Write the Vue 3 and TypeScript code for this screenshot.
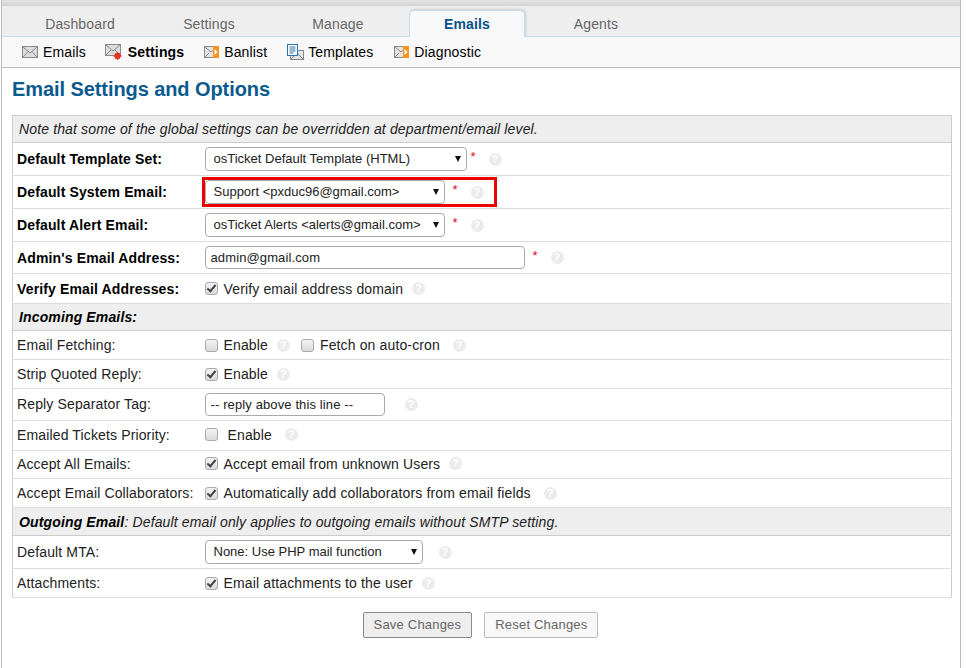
<script setup lang="ts">
const tabs = ['Dashboard', 'Settings', 'Manage', 'Emails', 'Agents'];
const subnav = [
  { label: 'Emails', icon: 'mail' },
  { label: 'Settings', icon: 'gear', active: true },
  { label: 'Banlist', icon: 'play' },
  { label: 'Templates', icon: 'doc' },
  { label: 'Diagnostic', icon: 'play' },
];
</script>

<template>
  <div class="page">
    <div class="topbar" />
    <div class="tabs">
      <a v-for="tab in tabs" :key="tab" class="tab" :class="{ active: tab === 'Emails' }">{{ tab }}</a>
    </div>
    <div class="subnav">
      <a v-for="item in subnav" :key="item.label" class="subitem" :class="{ active: item.active }">
        <svg v-if="item.icon === 'mail'" width="16" height="14" viewBox="0 0 16 14">
          <rect x=".5" y="1.5" width="15" height="11" fill="#ddd" stroke="#8a8a8a" />
          <path d="M1 2l7 6 7-6M1 12l5-5.5M15 12l-5-5.5" fill="none" stroke="#8a8a8a" />
        </svg>
        <svg v-else-if="item.icon === 'gear'" width="18" height="17" viewBox="0 0 18 17">
          <rect x=".5" y=".5" width="15" height="11" fill="#ddd" stroke="#8a8a8a" />
          <path d="M1 1l7 6 7-6M1 11l5-5M15 11l-5-5" fill="none" stroke="#8a8a8a" />
          <circle cx="12.5" cy="12" r="3" fill="#e2342b" />
          <path d="M12.500 8v8M8.500 12h8M10 9.500l5 5M15 9.500l-5 5" stroke="#e2342b" stroke-width="1.300" />
        </svg>
        <svg v-else-if="item.icon === 'play'" width="15" height="12" viewBox="0 0 15 12">
          <rect x=".5" y=".5" width="13" height="11" fill="#e4e4e4" stroke="#8a8a8a" />
          <path d="M1 1l6 5 2-1.500M1 11l4-4" fill="none" stroke="#8a8a8a" />
          <rect x="9" y="0" width="6" height="12" fill="#f7931e" />
          <path d="M10.500 3l3 3-3 3z" fill="#fff" />
        </svg>
        <svg v-else width="17" height="16" viewBox="0 0 17 16">
          <rect x="3.500" y="6.500" width="13" height="9" fill="#e4e4e4" stroke="#8a8a8a" />
          <path d="M4 15l5-5M16 15l-5-5" stroke="#8a8a8a" fill="none" />
          <rect x=".5" y=".5" width="10" height="11" fill="#fff" stroke="#2d72b0" />
          <path d="M2.500 3h6M2.500 5h6M2.500 7h6M2.500 9h4" stroke="#2d72b0" />
        </svg>
        <span>{{ item.label }}</span>
      </a>
    </div>

    <div class="content">
      <h2>Email Settings and Options</h2>
      <table class="settings">
        <colgroup>
          <col class="col-label" />
          <col />
        </colgroup>
        <tbody>
          <tr class="section h27">
            <td colspan="2"><em>Note that some of the global settings can be overridden at department/email level.</em></td>
          </tr>
          <tr class="h33">
            <td class="label strong">Default Template Set:</td>
            <td>
              <div class="field">
                <div class="select w262"><select><option>osTicket Default Template (HTML)</option></select><i class="arrow" /></div>
                <span class="req">*</span><span class="help gap-req">?</span>
              </div>
            </td>
          </tr>
          <tr class="h33">
            <td class="label strong">Default System Email:</td>
            <td>
              <div class="field">
                <div class="select w240"><select><option>Support &lt;pxduc96@gmail.com&gt;</option></select><i class="arrow" /></div>
                <span class="req wide-req">*</span><span class="help gap-req">?</span>
                <div class="redbox" />
              </div>
            </td>
          </tr>
          <tr class="h33">
            <td class="label strong">Default Alert Email:</td>
            <td>
              <div class="field">
                <div class="select w240"><select><option>osTicket Alerts &lt;alerts@gmail.com&gt;</option></select><i class="arrow" /></div>
                <span class="req wide-req">*</span><span class="help gap-req">?</span>
              </div>
            </td>
          </tr>
          <tr class="h32">
            <td class="label strong">Admin's Email Address:</td>
            <td>
              <div class="field">
                <input class="text w320" value="admin@gmail.com" />
                <span class="req wide-req">*</span><span class="help gap-req">?</span>
              </div>
            </td>
          </tr>
          <tr class="h30">
            <td class="label strong">Verify Email Addresses:</td>
            <td>
              <div class="field">
                <span class="check on" /><span class="opt">Verify email address domain</span><span class="help">?</span>
              </div>
            </td>
          </tr>

          <tr class="section h27">
            <td colspan="2"><em class="bold">Incoming Emails:</em></td>
          </tr>
          <tr class="h29">
            <td class="label">Email Fetching:</td>
            <td>
              <div class="field">
                <span class="check" /><span class="opt">Enable</span><span class="help">?</span>
                <span class="check second" /><span class="opt">Fetch on auto-cron</span><span class="help wide">?</span>
              </div>
            </td>
          </tr>
          <tr class="h29">
            <td class="label">Strip Quoted Reply:</td>
            <td>
              <div class="field">
                <span class="check on" /><span class="opt">Enable</span><span class="help">?</span>
              </div>
            </td>
          </tr>
          <tr class="h32">
            <td class="label raised">Reply Separator Tag:</td>
            <td>
              <div class="field">
                <input class="text w180" value="-- reply above this line --" /><span class="help after-input">?</span>
              </div>
            </td>
          </tr>
          <tr class="h30 raise-all">
            <td class="label">Emailed Tickets Priority:</td>
            <td>
              <div class="field">
                <span class="check" /><span class="opt spaced">Enable</span><span class="help wide">?</span>
              </div>
            </td>
          </tr>
          <tr class="h28 raise-all">
            <td class="label">Accept All Emails:</td>
            <td>
              <div class="field">
                <span class="check on" /><span class="opt">Accept email from unknown Users</span><span class="help">?</span>
              </div>
            </td>
          </tr>
          <tr class="h29">
            <td class="label">Accept Email Collaborators:</td>
            <td>
              <div class="field">
                <span class="check on" /><span class="opt">Automatically add collaborators from email fields</span><span class="help wide">?</span>
              </div>
            </td>
          </tr>

          <tr class="section h28">
            <td colspan="2"><em><b>Outgoing Email</b>: Default email only applies to outgoing emails without SMTP setting.</em></td>
          </tr>
          <tr class="h33">
            <td class="label">Default MTA:</td>
            <td>
              <div class="field">
                <div class="select w218"><select><option>None: Use PHP mail function</option></select><i class="arrow" /></div>
                <span class="help after-mta">?</span>
              </div>
            </td>
          </tr>
          <tr class="h29">
            <td class="label">Attachments:</td>
            <td>
              <div class="field">
                <span class="check on" /><span class="opt">Email attachments to the user</span><span class="help">?</span>
              </div>
            </td>
          </tr>
        </tbody>
      </table>

      <div class="actions">
        <button class="btn save" type="button">Save Changes</button>
        <button class="btn" type="button">Reset Changes</button>
      </div>
    </div>
  </div>
</template>

<style>
html,
body {
  background: #fff;
}
</style>

<style scoped>
.page {
  width: 958px;
  height: 668px;
  margin-left: 1px;
  border-left: 1px solid #bbb;
  border-right: 1px solid #bbb;
  box-sizing: content-box;
  font-family: "Liberation Sans", Arial, sans-serif;
  font-size: 14px;
  letter-spacing: .14px;
  color: #000;
  overflow: hidden;
}

.topbar {
  height: 6px;
  margin-left: -2px;
  margin-right: -1px;
  background: linear-gradient(#e4e4e4, #d4d4d4);
}

.tabs {
  display: flex;
  gap: 13px;
  height: 30px;
  padding-left: 20px;
  background: #eeeeee;
  border-bottom: 1px solid #c4dcf0;
  box-sizing: content-box;
}

.tab {
  width: 116px;
  margin-top: 4px;
  height: 26px;
  line-height: 28px;
  text-align: center;
  color: #666;
  box-sizing: border-box;
}

.tab.active {
  height: 27px;
  line-height: 26px;
  color: #0a5288;
  font-weight: 700;
  background: #f8f8f8;
  border: 1px solid #c4dcf0;
  border-bottom: 0;
  border-radius: 5px 5px 0 0;
  box-shadow: 1px -1px 2px #ccc;
}

.subnav {
  display: flex;
  align-items: center;
  gap: 20px;
  height: 30px;
  padding-left: 20px;
  background: #f8f8f8;
  border-bottom: 1px solid #bbb;
}

.subitem {
  display: flex;
  align-items: center;
  gap: 5px;
  color: #000;
}

.subitem:first-child {
  margin-right: -1px;
}

.subitem:nth-child(4) {
  gap: 4px;
  margin-right: 1px;
}

.subitem.active {
  font-weight: 700;
}

.content {
  padding: 0 6px 0 10px;
}

h2 {
  margin: 0;
  padding-top: 9px;
  height: 47px;
  box-sizing: border-box;
  font-size: 20px;
  letter-spacing: -.08px;
  line-height: 24px;
  font-weight: 700;
  color: #0a5a8e;
}

.settings {
  width: 940px;
  border-collapse: collapse;
  table-layout: fixed;
  border: 1px solid #ccc;
}

.col-label {
  width: 188px;
}

.settings td {
  padding: 0 4px;
  border-bottom: 1px solid #ddd;
  vertical-align: middle;
  white-space: nowrap;
}

.settings td.raised,
.settings .raise-all td {
  padding-bottom: 2px;
}

.h27 { height: 27px; }
.h28 { height: 28px; }
.h29 { height: 29px; }
.h30 { height: 30px; }
.h32 { height: 32px; }
.h33 { height: 33px; }

.section td {
  padding-left: 6px;
  background: #eeeeee;
  border-top: 1px solid #ccc;
  border-bottom: 1px solid #ccc;
}

.section em {
  color: #222;
}

.section em.bold,
.section b {
  font-weight: 700;
  color: #000;
}

.label {
  color: #222;
}

.label.strong {
  font-weight: 700;
  color: #000;
}

.field {
  display: flex;
  align-items: center;
  position: relative;
}

.select {
  position: relative;
  height: 24px;
  box-sizing: border-box;
}

.w262 { width: 262px; }
.w240 { width: 240px; }
.w218 { width: 218px; }
.w320 { width: 320px; }
.w180 { width: 180px; }

.select select {
  appearance: none;
  width: 100%;
  height: 100%;
  padding: 0 20px 2px 8px;
  border: 1px solid #aaa;
  border-radius: 4px;
  background: #fff;
  color: #222;
  font: 13px "Liberation Sans", Arial, sans-serif;
}

.arrow {
  position: absolute;
  right: 6px;
  top: 9px;
  border-left: 3.5px solid transparent;
  border-right: 3.5px solid transparent;
  border-top: 6px solid #111;
}

.text {
  height: 23px;
  padding: 0 5px;
  box-sizing: border-box;
  border: 1px solid #aaa;
  border-radius: 4px;
  color: #222;
  font: 13px "Liberation Sans", Arial, sans-serif;
  letter-spacing: .12px;
}

.req {
  margin-left: 4px;
  width: 5px;
  color: #e8002a;
  font-size: 13px;
  line-height: 14px;
  margin-top: -4px;
}

.req.wide-req {
  margin-left: 8px;
}

.help {
  display: inline-block;
  width: 13px;
  height: 13px;
  margin-left: 9px;
  border-radius: 50%;
  background: #ebebeb;
  color: #fff;
  font-size: 11px;
  font-weight: 700;
  line-height: 13px;
  text-align: center;
  flex: none;
}

.help.gap-req { margin-left: 13px; }
.help.wide { margin-left: 13px; }
.help.after-input { margin-left: 20px; }
.help.after-mta { margin-left: 16px; }

.check {
  position: relative;
  width: 13px;
  height: 13px;
  box-sizing: border-box;
  border: 1px solid #aaa;
  border-radius: 3px;
  background: linear-gradient(#f4f4f4, #dadada);
  flex: none;
}

.check.on::after {
  content: "";
  position: absolute;
  left: 3.500px;
  top: 0;
  width: 3px;
  height: 7px;
  border: solid #444;
  border-width: 0 2px 2px 0;
  transform: rotate(40deg);
}

.check.second {
  margin-left: 11px;
}

.opt {
  margin-left: 6px;
  color: #222;
}

.opt.spaced {
  margin-left: 10px;
}

.redbox {
  position: absolute;
  left: -3px;
  top: -3px;
  width: 295px;
  height: 30px;
  box-sizing: border-box;
  border: 3px solid #ee0000;
  pointer-events: none;
}

.actions {
  display: flex;
  justify-content: center;
  gap: 12px;
  margin-top: 14px;
  padding-right: 5px;
}

.btn {
  height: 26px;
  padding: 0 10px 2px;
  border: 1px solid #bbb;
  border-radius: 2px;
  background: #f8f8f8;
  color: #666;
  font: 13px "Liberation Sans", Arial, sans-serif;
  letter-spacing: .2px;
}

.btn.save {
  border-color: #888;
  background: #eeeeee;
}
</style>
